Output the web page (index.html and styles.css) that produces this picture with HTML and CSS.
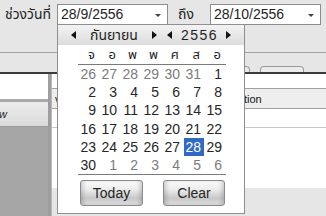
FILE: index.html
```html
<!DOCTYPE html>
<html lang="th">
<head>
<meta charset="utf-8">
<link rel="stylesheet" href="styles.css">
</head>
<body>
<div class="toolbar">
  <span class="lbl lbl-from">ช่วงวันที่</span>
  <div class="combo c1"><span class="val">28/9/2556</span><span class="arrow"></span></div>
  <span class="lbl lbl-to">ถึง</span>
  <div class="combo c2"><span class="val">28/10/2556</span><span class="arrow"></span></div>
</div>
<div class="tabstrip">
  <div class="tab tab1"></div>
  <div class="tab tab2"></div>
</div>
<div class="darkline"></div>
<div class="main">
  <div class="side">
    <div class="side-top"></div>
    <div class="side-sep"></div>
    <div class="side-btn">w</div>
    <div class="side-rest"></div>
  </div>
  <div class="splitter"></div>
  <div class="grid">
    <div class="g-top"></div>
    <div class="g-head"><span class="gh1">v</span><span class="gh2">tion</span></div>
    <div class="g-row"></div>
    <div class="g-body"></div>
    <div class="g-foot"></div>
  </div>
</div>

<div class="popup">
  <div class="cal-head">
    <div class="nav nav-month">
      <span class="tri tri-l"></span>
      <span class="nav-text">กันยายน</span>
      <span class="tri tri-r"></span>
    </div>
    <div class="nav nav-year">
      <span class="tri tri-l"></span>
      <span class="nav-text year">2556</span>
      <span class="tri tri-r"></span>
    </div>
  </div>
  <div class="weekdays">
    <span>จ</span><span>อ</span><span>พ</span><span>พ</span><span>ศ</span><span>ส</span><span>อ</span>
  </div>
  <div class="rule"></div>
  <div class="days">
    <span class="other">26</span><span class="other">27</span><span class="other">28</span><span class="other">29</span><span class="other">30</span><span class="other">31</span><span>1</span>
    <span>2</span><span>3</span><span>4</span><span>5</span><span>6</span><span>7</span><span>8</span>
    <span>9</span><span>10</span><span>11</span><span>12</span><span>13</span><span>14</span><span>15</span>
    <span>16</span><span>17</span><span>18</span><span>19</span><span>20</span><span>21</span><span>22</span>
    <span>23</span><span>24</span><span>25</span><span>26</span><span>27</span><span class="sel">28</span><span>29</span>
    <span>30</span><span class="other">1</span><span class="other">2</span><span class="other">3</span><span class="other">4</span><span class="other">5</span><span class="other">6</span>
  </div>
  <div class="rule"></div>
  <div class="btns">
    <button class="btn btn-today">Today</button>
    <button class="btn btn-clear">Clear</button>
  </div>
</div>
</body>
</html>
```

FILE: styles.css
```css
* { box-sizing: border-box; margin: 0; padding: 0; }
html, body { width: 326px; height: 216px; overflow: hidden; }
body {
  background: #e6e6e6;
  font-family: "Liberation Sans", "Noto Sans", "Noto Sans Thai", "Loma", "Garuda", sans-serif;
  font-size: 14px;
  color: #222;
  position: relative;
}

/* top toolbar */
.toolbar {
  height: 53px;
  border-bottom: 1px solid #a3a3a3;
  display: flex;
  align-items: flex-start;
  padding-top: 4px;
}
.lbl { height: 21px; line-height: 20px; font-size: 14px; white-space: nowrap; color: #1e1e1e; }
.lbl-from { width: 57px; padding-left: 5px; }
.lbl-to { width: 42px; padding-left: 10px; }
.combo {
  height: 21px;
  background: #fff;
  border: 1px solid #8c8c8c;
  display: flex;
  align-items: center;
  justify-content: space-between;
  padding: 0 6px 0 3px;
}
.c1 { width: 111px; }
.c2 { width: 111px; }
.val { font-size: 14px; line-height: 19px; color: #1e1e1e; }
.arrow {
  width: 0; height: 0;
  border-left: 3px solid transparent;
  border-right: 3px solid transparent;
  border-top: 3px solid #404040;
  margin-top: 2px;
}

/* tab strip */
.tabstrip { height: 19px; display: flex; align-items: flex-end; }
.tab {
  height: 6px;
  border: 1px solid #9a9a9a;
  border-bottom: none;
  border-radius: 4px 4px 0 0;
  background: #e9e9e9;
}
.tab1 { margin-left: 200px; width: 50px; }
.tab2 { margin-left: 10px; width: 44px; background: #ececec; }
.darkline { height: 2px; background: #3c3c3c; }

/* main area */
.main { display: flex; height: 142px; }
.side { width: 48px; display: flex; flex-direction: column; }
.side-top { height: 25px; background: #fff; }
.side-sep { height: 3px; background: #a9a9a9; }
.side-btn {
  height: 25px;
  background: linear-gradient(#ececec, #dadada);
  border-bottom: 1px solid #9a9a9a;
  font-size: 11px;
  line-height: 24px;
  font-style: italic;
  color: #222;
  margin-left: -1px;
}
.side-rest { flex: 1; background: #a6a6a6; }
.splitter { width: 4px; background: #9e9e9e; border-right: 1px solid #b8b8b8; }
.grid { flex: 1; display: flex; flex-direction: column; }
.g-top { height: 14px; background: #fff; }
.g-head {
  height: 21px;
  background: #eeeeee;
  border-top: 1px solid #a0a0a0;
  border-bottom: 1px solid #a0a0a0;
  display: flex;
  align-items: center;
  font-size: 11px;
  color: #111;
}
.gh1 { width: 192px; padding-left: 3px; }
.g-row { height: 19px; background: #fff; border-bottom: 1px solid #c8c8c8; }
.g-body { height: 60px; background: #fff; }
.g-foot { flex: 1; background: #e6e6e6; }

/* calendar popup */
.popup {
  position: absolute;
  left: 57px;
  top: 24px;
  width: 188px;
  height: 190px;
  background: #fff;
  border: 1px solid #8e8e8e;
}
.cal-head {
  height: 20px;
  display: flex;
  background: linear-gradient(#f3f3f3, #dcdcdc);
}
.nav { display: flex; align-items: center; height: 20px; }
.nav-month { width: 105px; padding-left: 13px; padding-right: 6px; }
.nav-year { width: 80px; padding-left: 4px; padding-right: 12px; }
.nav-text { flex: 1; text-align: center; font-size: 14px; color: #1e1e1e; }
.year { letter-spacing: 1.5px; padding-left: 1px; }
.tri { width: 0; height: 0; border-top: 4.5px solid transparent; border-bottom: 4.5px solid transparent; }
.tri-l { border-right: 5px solid #111; }
.tri-r { border-left: 5px solid #111; }

.weekdays, .days {
  margin-left: 20px;
  width: 147px;
  display: grid;
  grid-template-columns: repeat(7, 21px);
}
.weekdays { height: 19px; align-items: center; font-size: 13px; color: #1e1e1e; }
.weekdays span { text-align: right; padding-right: 4px; }
.rule { margin-left: 20px; width: 148px; height: 1px; background: #7a7a7a; }
.days { height: 109px; grid-template-rows: repeat(6, 1fr); font-size: 14px; }
.days span { display: flex; align-items: center; justify-content: flex-end; padding-right: 3px; color: #262626; }
.days span.other { color: #7c7c7c; }
.days span.sel { background: #3169c6; color: #fff; margin-left: 1px; }

.btns { display: flex; margin-top: 5px; height: 26px; }
.btn {
  font-family: inherit;
  font-size: 14px;
  color: #262626;
  height: 26px;
  border: 1px solid #8a8a8a;
  border-radius: 3px;
  background: linear-gradient(#fbfbfb 0%, #ececec 35%, #c8c8c8 72%, #dedede 100%);
  box-shadow: inset 4px 0 4px -2px rgba(0,0,0,0.18), inset -4px 0 4px -2px rgba(0,0,0,0.18);
}
.btn-today { margin-left: 22px; width: 63px; }
.btn-clear { margin-left: 20px; width: 62px; }
```
